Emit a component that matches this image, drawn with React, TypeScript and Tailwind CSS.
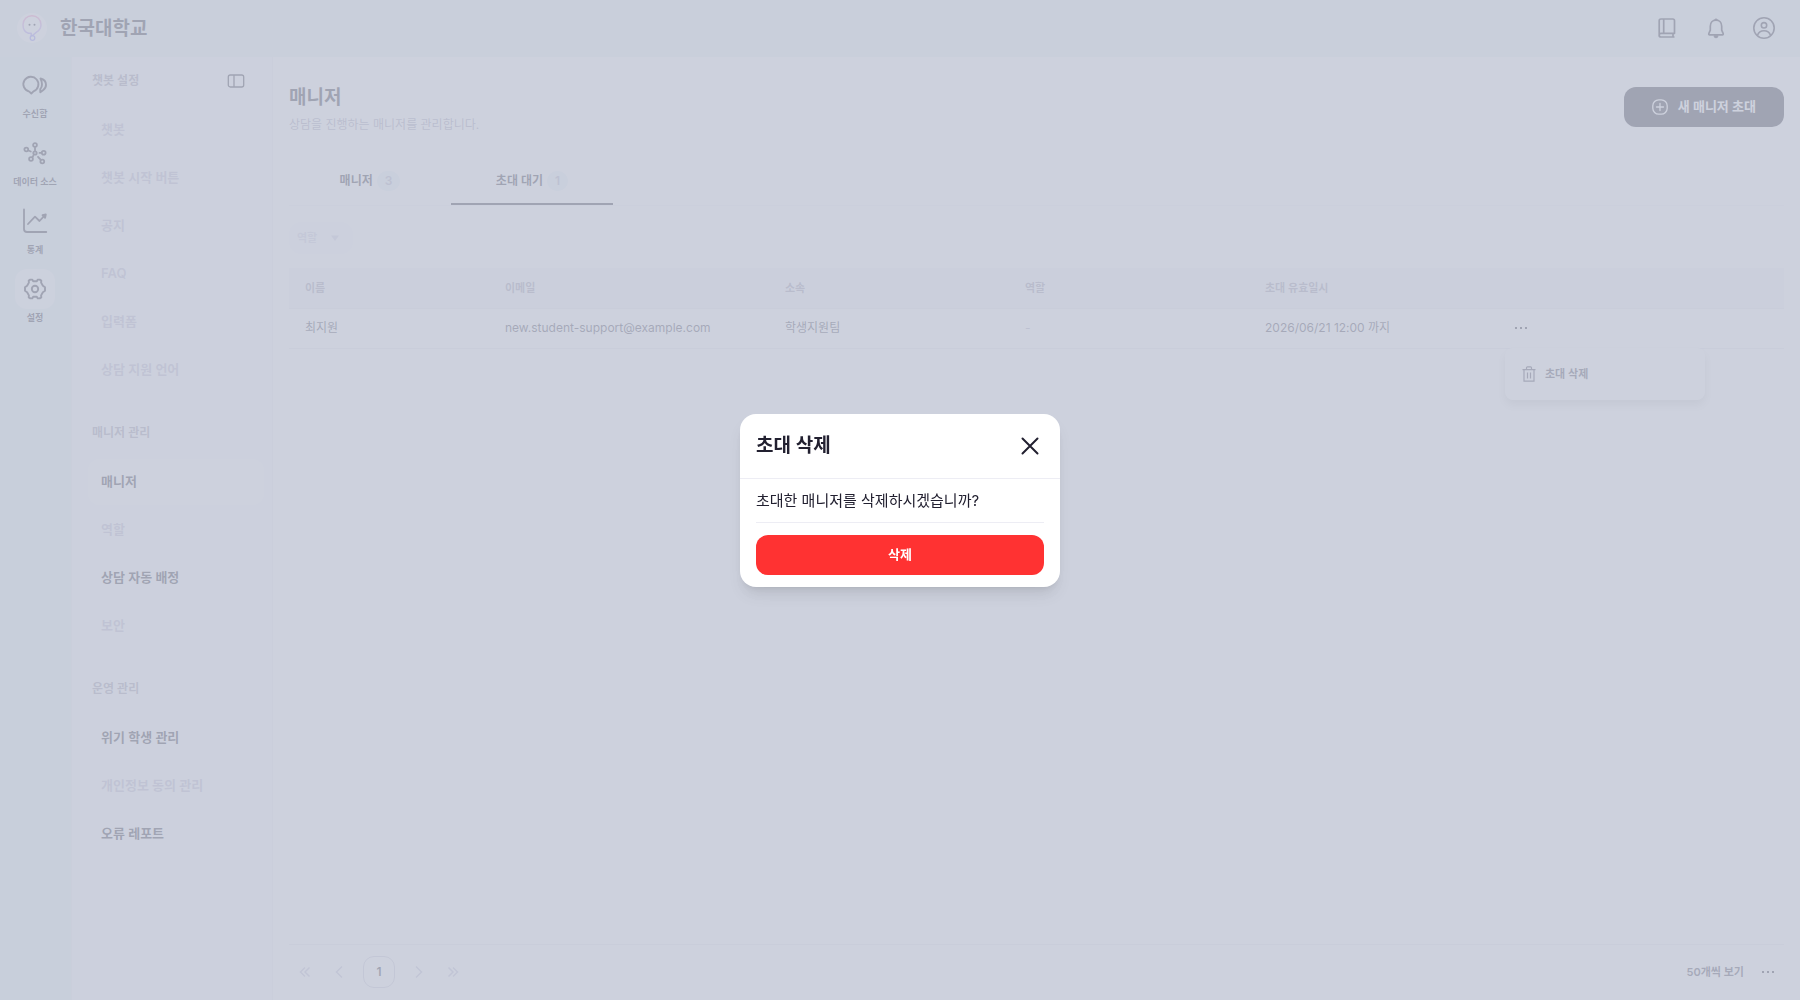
import React from "react";
import clsx from "clsx";

type IconProps = { className?: string };

const menuGroups = [
  {
    title: "챗봇 설정",
    items: [
      { label: "챗봇" },
      { label: "챗봇 시작 버튼" },
      { label: "공지" },
      { label: "FAQ" },
      { label: "입력폼" },
      { label: "상담 지원 언어" },
    ],
  },
  {
    title: "매니저 관리",
    items: [
      { label: "매니저", enabled: true, active: true },
      { label: "역할" },
      { label: "상담 자동 배정", enabled: true },
      { label: "보안" },
    ],
  },
  {
    title: "운영 관리",
    items: [
      { label: "위기 학생 관리", enabled: true },
      { label: "개인정보 동의 관리" },
      { label: "오류 레포트", enabled: true },
    ],
  },
];

const columns = [
  { label: "이름", width: "w-[200px]" },
  { label: "이메일", width: "w-[280px]" },
  { label: "소속", width: "w-[240px]" },
  { label: "역할", width: "w-[240px]" },
  { label: "초대 유효일시", width: "w-[240px]" },
];

const Logo = () => (
  <svg className="size-[30px]" viewBox="0 0 30 30" fill="none">
    <defs>
      <linearGradient id="logo-line" x1="0" y1="2" x2="0" y2="28" gradientUnits="userSpaceOnUse">
        <stop stopColor="#ff8fc0" />
        <stop offset="0.5" stopColor="#c9a6f5" />
        <stop offset="1" stopColor="#8f8cff" />
      </linearGradient>
    </defs>
    <circle cx="15" cy="15" r="15" fill="#fff" />
    <path
      d="M13.5 20.2H11.5C8.3 19.2 6 15.8 6 11.7a9 9 0 0 1 18 0c0 3.3-2 5.9-4.5 7.5l-4 3.3-1.3 0v-2.3z"
      stroke="url(#logo-line)"
      strokeWidth="1.5"
      strokeLinejoin="round"
    />
    <circle cx="15.5" cy="25" r="2.3" stroke="#8f8cff" strokeWidth="1.3" />
    <circle cx="12.5" cy="11.8" r="1" fill="#222030" />
    <circle cx="17.5" cy="11.8" r="1" fill="#222030" />
  </svg>
);

const InboxIcon = () => (
  <svg className="size-7" viewBox="0 0 28 28" fill="none" stroke="currentColor" strokeWidth="1.9" strokeLinejoin="round" strokeLinecap="round">
    <path d="M8.3 20.6A7.500 7.500 0 1 1 12.500 20.300L10.300 22.500z" />
    <path d="M19.500 7.500c3.800.9 5.500 3.500 5.500 6.300 0 2.300-1 4.200-3 5.500l-2.700 2v-3.200c1.200-1.300 1.700-2.800 1.700-4.600 0-2.200-.5-4-1.500-6z" />
  </svg>
);

const SourceIcon = () => (
  <svg className="size-7" viewBox="0 0 28 28" fill="none" stroke="currentColor" strokeWidth="1.8" strokeLinecap="round">
    <circle cx="14" cy="14" r="1.7" />
    <circle cx="14" cy="6" r="1.9" />
    <circle cx="5.3" cy="10.5" r="1.9" />
    <circle cx="22.7" cy="13.8" r="1.9" />
    <circle cx="10" cy="20" r="1.9" />
    <circle cx="21.3" cy="22.5" r="1.9" />
    <path d="M14 8.5v3M7.5 11.5l2.3 1M18.5 13.9h1.5M12.3 16.7l-.8 1.3M17 17.8l2.6 2.9" />
  </svg>
);

const StatsIcon = () => (
  <svg className="size-7" viewBox="0 0 28 28" fill="none" stroke="currentColor" strokeWidth="1.8" strokeLinecap="round" strokeLinejoin="round">
    <path d="M3 2.5V22a3 3 0 0 0 3 3h19.3" />
    <path d="M7 17l7-7.3 4.5 4.3 5-5.3" />
    <path d="M21.5 8.2l3.3-.7-.7 3.4z" fill="currentColor" />
  </svg>
);

const GearIcon = () => (
  <svg className="size-7" viewBox="0 0 28 28" fill="none" stroke="currentColor" strokeWidth="1.9" strokeLinejoin="round">
    <path d="M9.3 4.6L11.2 4.6 12.2 6.2H15.8L16.8 4.6H18.7L20.3 5.6 20.1 7.6 21.9 10.8 24 12.2V15.8L21.9 17.2 20.1 20.4 20.3 22.4 18.7 23.4H16.8L15.8 21.8H12.2L11.2 23.4H9.3L7.7 22.4 7.9 20.4 6.1 17.2 4 15.8V12.2L6.1 10.8 7.9 7.6 7.7 5.6z" />
    <circle cx="14" cy="14" r="3.2" />
  </svg>
);

const PanelIcon = () => (
  <svg className="size-5" viewBox="0 0 20 20" fill="none" stroke="currentColor" strokeWidth="1.3">
    <rect x="2.3" y="4" width="15.4" height="12" rx="2" />
    <path d="M8 4v12" />
  </svg>
);

const BookIcon = () => (
  <svg className="size-6" viewBox="0 0 24 24" fill="none" stroke="currentColor" strokeWidth="1.7" strokeLinejoin="round">
    <path d="M18.5 21H5a1.8 1.8 0 0 1-1.8-1.8V4.7A1.7 1.7 0 0 1 5 3h11.8a1.7 1.7 0 0 1 1.7 1.7v12.6H5a1.85 1.85 0 0 0 0 3.7M7.7 3v14.3M17 17.5V21" />
  </svg>
);

const BellIcon = () => (
  <svg className="size-6" viewBox="0 0 24 24" fill="none" stroke="currentColor" strokeWidth="1.7" strokeLinejoin="round">
    <path d="M12 4.2c-3.4 0-5.7 2.6-5.7 6v4l-1.500 3.500a.9.9 0 0 0 .8 1.200h12.800a.9.9 0 0 0 .8-1.200l-1.500-3.500v-4c0-3.400-2.300-6-5.700-6z" />
    <path d="M10.700 3.800a1.400 1.400 0 0 1 2.600 0zM10 19.800h4a2 2 0 0 1-4 0z" fill="currentColor" strokeWidth="1" />
  </svg>
);

const UserIcon = () => (
  <svg className="size-6" viewBox="0 0 24 24" fill="none" stroke="currentColor" strokeWidth="1.6">
    <circle cx="12" cy="12" r="10.2" />
    <circle cx="12" cy="9.3" r="2.7" />
    <path d="M5.5 19.3c1-2.9 3.5-4.5 6.5-4.5s5.5 1.6 6.5 4.5" />
  </svg>
);

const PlusIcon = () => (
  <svg className="size-4" viewBox="0 0 16 16" fill="none" stroke="currentColor" strokeWidth="1.3" strokeLinecap="round">
    <rect x="0.8" y="0.8" width="14.4" height="14.4" rx="6" />
    <path d="M8 4.5v7M4.5 8h7" />
  </svg>
);

const TrashIcon = () => (
  <svg className="size-4" viewBox="0 0 16 16" fill="none" stroke="currentColor" strokeWidth="1.2">
    <path d="M1.5 3.7h13M3 3.7v11.500h10V3.7M5.500 3.500V1.700a.9.9 0 0 1 .9-.9h3.200a.9.9 0 0 1 .9.9v1.800M6.500 6.500v6M9.500 6.500v6" />
  </svg>
);

const DotsIcon = () => (
  <svg className="size-4" viewBox="0 0 16 16" fill="currentColor">
    <path d="M2 7h2v2H2zM7 7h2v2H7zM12 7h2v2h-2z" />
  </svg>
);

const Chevron = ({ className, double }: IconProps & { double?: boolean }) => (
  <svg className={clsx("size-4", className)} viewBox="0 0 16 16" fill="none" stroke="currentColor" strokeWidth="1.5">
    {double ? <path d="M8 3.5L3.5 8 8 12.5M12.5 3.5L8 8l4.5 4.5" /> : <path d="M11 2.5L5.5 8l5.5 5.5" />}
  </svg>
);

const railItems = [
  { label: "수신함", icon: <InboxIcon /> },
  { label: "데이터 소스", icon: <SourceIcon /> },
  { label: "통계", icon: <StatsIcon /> },
  { label: "설정", icon: <GearIcon />, active: true },
];

const Header = () => (
  <header className="flex h-[57px] shrink-0 items-center justify-between bg-[#e9f2f6] pr-6 pb-px pl-[17px]">
    <a href="#home" className="flex items-center gap-[13px]">
      <Logo />
      <span className="pt-0.5 text-[19px] font-semibold">한국대학교</span>
    </a>
    <div className="flex items-center gap-6">
      <button aria-label="가이드">
        <BookIcon />
      </button>
      <button aria-label="알림">
        <BellIcon />
      </button>
      <button aria-label="내 계정">
        <UserIcon />
      </button>
    </div>
  </header>
);

const Rail = () => (
  <nav className="flex w-[71px] shrink-0 flex-col gap-2.5 bg-[#e6f2f6] pt-2 pr-px">
    {railItems.map((item) => (
      <a key={item.label} href="#menu" className="flex flex-col items-center">
        <span className={clsx("flex size-10 items-center justify-center rounded-xl", item.active && "bg-white/80")}>
          {item.icon}
        </span>
        <span className="text-[9px] leading-[18px] font-semibold">{item.label}</span>
      </a>
    ))}
  </nav>
);

const Sidebar = () => (
  <aside className="flex w-[202px] shrink-0 flex-col gap-4 border-x border-[#ededf4] bg-[#fafbfd] px-4">
    {menuGroups.map((group, index) => (
      <section key={group.title} className="flex flex-col gap-0.5">
        <div className="flex h-12 items-center justify-between pr-2.5 pl-1">
          <h2 className="text-xs font-semibold text-[#9b98ac]">{group.title}</h2>
          {index === 0 && (
            <button aria-label="메뉴 접기">
              <PanelIcon />
            </button>
          )}
        </div>
        {group.items.map((item) => (
          <a
            key={item.label}
            href="#setting"
            className={clsx(
              "-mr-2 flex h-11.5 items-center rounded-xl px-[13px] text-[13px] font-semibold",
              !item.enabled && "text-[#bcb9d1]",
              item.active && "bg-white"
            )}
          >
            {item.label}
          </a>
        ))}
      </section>
    ))}
  </aside>
);

const Tab = ({ label, count, active }: { label: string; count: number; active?: boolean }) => (
  <button
    role="tab"
    aria-selected={!!active}
    className={clsx(
      "flex w-[162px] items-center justify-center gap-1 border-b-2 text-xs font-semibold",
      active ? "border-[#222030]" : "border-transparent"
    )}
  >
    {label}
    <span className="flex h-5 items-center rounded-full bg-[#e9f2f7] px-2 text-[#b0aec4]">{count}</span>
  </button>
);

const InviteTable = () => (
  <table className="w-full table-fixed text-left">
    <thead>
      <tr className="h-10 border-b border-[#e9eaf1] bg-[#f5f6fa] text-[11px] text-[#9b98ac]">
        {columns.map((column) => (
          <th key={column.label} className={clsx("px-4 font-semibold", column.width)}>
            {column.label}
          </th>
        ))}
        <th aria-label="메뉴" />
      </tr>
    </thead>
    <tbody>
      <tr className="h-10 border-b border-[#e9eaf1] text-xs text-[#3c3a4e]">
        <td className="px-4">최지원</td>
        <td className="px-4">new.student-support@example.com</td>
        <td className="px-4">학생지원팀</td>
        <td className="px-4 text-[#b0aec4]">-</td>
        <td className="px-4">2026/06/21 12:00 까지</td>
        <td className="px-4">
          <div className="relative w-8">
            <button className="flex h-8 w-8 items-center justify-center text-[#222030]" aria-label="더보기">
              <DotsIcon />
            </button>
            <div className="absolute top-9 left-0 w-[200px] rounded-lg bg-white p-2 shadow-[0_5px_10px_rgba(0,0,0,0.18)]">
              <button className="flex h-9 w-full items-center gap-2 px-2 text-[11px] font-semibold">
                <TrashIcon />
                초대 삭제
              </button>
            </div>
          </div>
        </td>
      </tr>
    </tbody>
  </table>
);

const Pagination = () => (
  <footer className="mt-auto flex h-14 items-center justify-between border-t border-[#e9eaf1] pb-px">
    <div className="flex items-center text-[#c4c1d8]">
      <button className="flex size-8 items-center justify-center" aria-label="처음">
        <Chevron double />
      </button>
      <button className="ml-0.5 flex size-8 items-center justify-center" aria-label="이전">
        <Chevron />
      </button>
      <button className="mx-2 size-8 rounded-[11px] border border-[#cccad9] text-xs font-semibold text-[#222030]">
        1
      </button>
      <button className="flex size-8 items-center justify-center" aria-label="다음">
        <Chevron className="rotate-180" />
      </button>
      <button className="ml-0.5 flex size-8 items-center justify-center" aria-label="마지막">
        <Chevron double className="rotate-180" />
      </button>
    </div>
    <div className="flex items-center gap-2">
      <span className="text-[11px] font-semibold text-[#3c3a4e]">50개씩 보기</span>
      <button className="flex size-8 items-center justify-center" aria-label="보기 개수 변경">
        <DotsIcon />
      </button>
    </div>
  </footer>
);

const DeleteModal = () => (
  <div className="fixed inset-0 flex items-center justify-center bg-[#c1c5d5]/80">
    <div role="dialog" aria-modal="true" aria-labelledby="modal-title" className="w-80 rounded-2xl bg-white shadow-lg">
      <div className="flex h-[65px] items-center justify-between border-b border-[#ededf4] px-4">
        <h2 id="modal-title" className="pt-0.5 text-[19px] font-semibold">
          초대 삭제
        </h2>
        <button className="flex size-7 items-center justify-center" aria-label="닫기">
          <svg className="size-5" viewBox="0 0 20 20" fill="none" stroke="currentColor" strokeWidth="2" strokeLinecap="round">
            <path d="M2.5 2.5l15 15M17.5 2.5l-15 15" />
          </svg>
        </button>
      </div>
      <div className="px-4 pb-3">
        <p className="border-b border-[#ededf4] py-2.5 text-[15px] leading-[23px]">초대한 매니저를 삭제하시겠습니까?</p>
        <button className="mt-3 h-10 w-full rounded-xl bg-[#ff3232] text-[13px] font-semibold text-white">삭제</button>
      </div>
    </div>
  </div>
);

const App = () => {
  return (
    <div className="flex min-h-screen flex-col bg-white font-['Inter','Noto_Sans_CJK_KR',sans-serif] text-[#222030]">
      <Header />
      <div className="flex flex-1">
        <Rail />
        <Sidebar />
        <main className="flex min-w-0 flex-1 flex-col px-4 pt-[30px]">
          <div className="flex items-start justify-between">
            <div>
              <h1 className="text-[19px] leading-[22px] font-semibold">매니저</h1>
              <p className="mt-1 text-xs leading-6 text-[#a3a0b6]">상담을 진행하는 매니저를 관리합니다.</p>
            </div>
            <button className="flex h-10 items-center gap-2.5 rounded-xl bg-[#222030] px-7 text-[13px] font-semibold text-white">
              <PlusIcon />
              새 매니저 초대
            </button>
          </div>

          <div role="tablist" className="mt-[21px] flex h-12 border-b border-[#f4f4f9]">
            <Tab label="매니저" count={3} />
            <Tab label="초대 대기" count={1} active />
          </div>

          <div className="relative mt-4 mb-3.5 w-16 text-[#d3d1e3]">
            <select
              aria-label="역할"
              disabled
              className="h-8 w-full appearance-none rounded-xl bg-[#f8f9fc] px-2 text-[11px] font-semibold opacity-100"
            >
              <option>역할</option>
            </select>
            <svg className="pointer-events-none absolute top-3 right-3.5 size-2" viewBox="0 0 8 8" fill="currentColor">
              <path d="M0 1.5h8L4 7z" />
            </svg>
          </div>

          <InviteTable />
          <Pagination />
        </main>
      </div>
      <DeleteModal />
    </div>
  );
};

export default App;
